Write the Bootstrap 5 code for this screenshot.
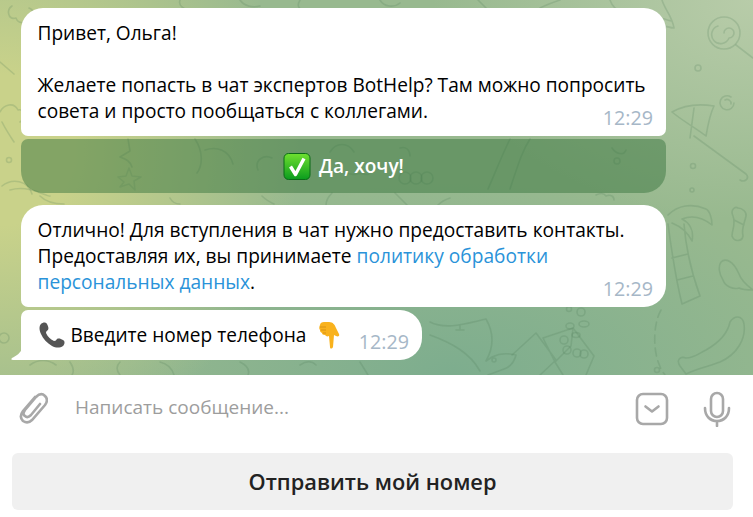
<!DOCTYPE html>
<html lang="ru">
<head>
    <meta charset="UTF-8">
    <meta name="viewport" content="width=device-width, initial-scale=1.0">
    <title>Чат</title>
    <link rel="stylesheet" href="https://cdn.jsdelivr.net/npm/bootstrap@5.3.0/dist/css/bootstrap.min.css">
    <style>
        html, body {
            height: 517px;
            overflow: hidden;
        }

        body {
            font-family: "Open Sans", "Noto Sans", sans-serif;
            background: #fff;
            color: #000;
        }

        .chat-area {
            height: 375px;
            padding: 8px 87px 0 21px;
            background:
                radial-gradient(ellipse 300px 300px at 0% 40%, #c9d28a 0%, #c9d28a 25%, rgba(201, 210, 138, 0) 100%),
                radial-gradient(ellipse 320px 220px at 100% 0%, #b8cca9 0%, rgba(184, 204, 169, 0) 100%),
                radial-gradient(ellipse 400px 200px at 60% 100%, #7dad8e 0%, rgba(125, 173, 142, 0) 100%),
                #98b98f;
        }

        .doodles {
            top: 0;
            left: 0;
            width: 753px;
            height: 375px;
            fill: none;
            stroke: #4d7a55;
            stroke-opacity: .2;
            stroke-width: 1.6;
            stroke-linecap: round;
            stroke-linejoin: round;
        }

        .bubble {
            background: #fff;
            border-radius: 22px;
            padding: 12px 16.5px 0;
            font-size: 19.1px;
            line-height: 26px;
            z-index: 1;
            white-space: nowrap;
        }

        .bubble-first {
            width: 645px;
            height: 128px;
            border-radius: 22px 22px 7px 7px;
        }

        .bubble-second {
            width: 645px;
            height: 102px;
            margin-top: 12px;
            font-size: 19.17px;
            border-radius: 22px 22px 22px 7px;
        }

        .bubble-third {
            width: 401px;
            height: 50px;
            margin-top: 3px;
            padding-top: 11px;
            border-radius: 7px 22px 22px 0;
        }

        .bubble-tail {
            left: -10px;
            bottom: 0;
        }

        .msg-time {
            right: 13px;
            bottom: 6px;
            color: #a6b7c7;
            font-size: 19.7px;
            line-height: 24px;
        }

        .msg-link {
            color: #2a93d9;
            text-decoration: none;
        }

        .inline-emoji {
            display: inline-block;
            vertical-align: -7px;
        }

        .emoji-hand {
            margin-left: 3px;
        }

        .reply-btn {
            width: 645px;
            height: 54px;
            margin-top: 3px;
            border: 0;
            border-radius: 7px 7px 22px 22px;
            background: rgba(55, 115, 60, .48);
            color: #fff;
            font-size: 19.1px;
            font-weight: 600;
            z-index: 1;
        }

        .composer {
            height: 68px;
            padding: 0 22px 0 18px;
        }

        .composer-placeholder {
            margin-left: 27px;
            margin-bottom: 3px;
            color: #9d9d9d;
            font-size: 19px;
        }

        .composer-square {
            margin-right: 34px;
        }

        .keyboard-wrap {
            padding: 10px 20px 7px 12px;
        }

        .keyboard-btn {
            height: 57px;
            padding-top: 8px;
            border: 0;
            border-radius: 6px;
            background: #f0f0f0;
            color: #222;
            font-size: 21.8px;
            font-weight: 600;
        }

        .keyboard-btn:hover {
            background: #e8e8e8;
            color: #222;
        }
    </style>
</head>
<body>

    <div class="chat-area position-relative d-flex flex-column align-items-start">
        <!-- wallpaper doodles -->
        <svg class="doodles position-absolute" viewBox="0 0 753 375">
            <!-- lollipop -->
            <circle cx="724" cy="33" r="16"/><path d="M724 33a5 5 0 1 1 5 5a9 9 0 1 1 -11 -12M736 45l17 13"/>
            <circle cx="698" cy="68" r="3"/>
            <path d="M734 103a7 7 0 1 1 -3 -6M725 100a4 4 0 0 1 6 4"/>
            <!-- bulb -->
            <path d="M662 0c3 10 10 16 12 28l-14 -3M660 25l12 3M660 18c2 0 10 3 12 3"/>
            <!-- umbrella -->
            <path d="M672 112c14 -8 30 -8 42 -6c-4 8 -6 18 -8 30c-10 -8 -22 -14 -34 -24M690 138l4 -30M694 136l52 38c4 4 -1 9 -6 6"/>
            <circle cx="693" cy="166" r="2.5"/><circle cx="692" cy="190" r="2"/>
            <!-- candy -->
            <path d="M738 208c-3 -2 -8 2 -5 8c3 8 -1 14 -1 20c2 6 10 6 11 0c-2 -8 2 -14 3 -20c1 -4 -4 -8 -8 -8zM734 220l10 5"/>
            <!-- fish -->
            <path d="M721 262c4 -4 12 -2 18 12c2 6 6 10 14 16c-6 0 -10 0 -14 -2c-6 2 -14 -2 -16 -8c-4 -6 -5 -14 -2 -18z"/>
            <!-- palm -->
            <path d="M668 215c10 -10 24 -12 38 -6c4 2 6 10 6 16c-10 -8 -20 -10 -30 -6c8 4 12 12 10 22c-4 -8 -10 -14 -20 -18M668 224c4 30 8 56 14 80l18 -8c-8 -22 -14 -46 -16 -72M672 258l16 -4M677 280l16 -4"/>
            <path d="M661 310c-8 14 -8 40 -2 54c2 6 4 8 6 11" stroke-dasharray="8 5"/>
            <!-- banana -->
            <path d="M730 322c4 -6 12 -8 14 2c2 14 -6 30 -24 38c-10 4 -22 6 -34 12l-6 -8c-4 -6 0 -10 6 -8c8 0 12 -4 20 -8c14 -8 22 -18 24 -28z"/>
            <circle cx="657" cy="370" r="2.5"/>
            <!-- gifts -->
            <path d="M543 338l30 -10l21 28l-8 19M543 338l12 24l8 13M573 328l-2 18l-16 16M512 355l24 -22l20 27l-16 15"/>
            <circle cx="564" cy="340" r="4"/><circle cx="567" cy="350" r="4"/><circle cx="577" cy="353" r="4"/><circle cx="584" cy="354" r="4"/>
            <ellipse cx="570" cy="326" rx="4" ry="3"/><ellipse cx="584" cy="324" rx="5" ry="3"/><ellipse cx="576" cy="335" rx="4" ry="2.5"/>
            <circle cx="581" cy="312" r="4"/><circle cx="569" cy="309" r="2.5"/>
            <!-- whale -->
            <path d="M430 322c16 8 34 2 56 -3c8 14 8 28 0 42l6 -4c8 -4 16 -4 24 -2c-2 8 -6 12 -12 14l-16 6M430 335c22 8 40 18 50 36"/>
            <circle cx="494" cy="360" r="2"/>
            <path d="M456 330h8M460 326v4"/>
            <!-- top row -->
            <path d="M300 0c-3 5 -2 9 3 10M380 0c4 7 14 8 20 3M478 0l14 14M540 8c8 -4 14 -6 20 -8M610 0c2 6 6 10 12 12M240 0c4 6 12 8 20 6M180 0c-2 6 4 10 12 10"/>
            <path d="M12 6c-6 4 -4 14 4 12c2 6 10 6 11 0c6 -2 8 -8 2 -10"/>
            <!-- left side -->
            <path d="M0 62l14 12M0 112c4 -8 14 -10 18 -2c6 -2 8 8 2 12M2 122c4 8 8 14 12 20"/>
            <circle cx="9" cy="160" r="2.5"/>
            <path d="M2 186c10 -8 26 -6 30 8"/>
            <!-- under reply button -->
            <path d="M40 196c6 6 14 8 24 8M170 198c2 4 6 6 10 6M262 196c4 4 8 6 12 8M332 193c-4 4 -6 8 -6 12M395 193c4 4 8 8 12 12M450 198c-6 2 -10 5 -12 7M596 195c4 -2 8 -2 10 1c4 -2 8 0 8 4"/>
            <!-- bottom row -->
            <path d="M30 365c8 -6 18 -6 26 0M70 362c4 6 4 10 2 13M120 362c-4 4 -4 8 0 13M160 362c8 2 12 6 14 13M240 362c8 4 10 8 8 13M300 365c6 -4 12 -4 16 0M360 362l8 13"/>
            <circle cx="4" cy="338" r="5"/>
            <!-- pattern behind the reply button -->
            <path d="M128 139l2 12l-10 6c6 2 10 4 12 10M195 139c8 12 8 26 2 34M205 150c12 -4 24 0 28 14M258 170c-4 -10 6 -16 14 -12M330 152c6 -10 18 -10 24 0M345 174c4 -2 8 2 12 0s8 2 12 0M400 148c6 -2 10 2 10 8"/>
            <circle cx="405" cy="178" r="6"/><circle cx="416" cy="178" r="6"/><circle cx="427" cy="178" r="6"/>
            <path d="M510 139c-8 16 -14 32 -22 50M530 139c-8 12 -12 26 -20 50M612 148c4 6 12 8 14 2"/>
            <circle cx="617" cy="161" r="3"/>
            <path d="M120 187l9 -3l6 6l-1 -9l7 -4l-9 -1l-3 -8l-3 8l-8 1l6 5z" opacity=".8"/>
            <path d="M10 190c20 -6 38 8 40 6"/>
        </svg>

        <div class="bubble bubble-first position-relative">
            Привет, Ольга!<br><br>
            Желаете попасть в чат экспертов BotHelp? Там можно попросить<br>
            совета и просто пообщаться с коллегами.
            <span class="msg-time position-absolute">12:29</span>
        </div>

        <button type="button" class="btn reply-btn position-relative d-flex align-items-center justify-content-center gap-2">
            <svg width="28" height="27" viewBox="0 0 27 27">
                <defs>
                    <linearGradient id="checkFill" x1="0" y1="0" x2="0" y2="1">
                        <stop offset="0" stop-color="#6fe02f"/>
                        <stop offset="1" stop-color="#0a9c1e"/>
                    </linearGradient>
                </defs>
                <rect x=".5" y=".5" width="26" height="26" rx="4.5" fill="url(#checkFill)" stroke="#0b6b17"/>
                <path d="M7 13.500l5 8l8.500 -16" fill="none" stroke="#fff" stroke-width="3.400" stroke-linejoin="round"/>
            </svg>
            <span>Да, хочу!</span>
        </button>

        <div class="bubble bubble-second position-relative">
            Отлично! Для вступления в чат нужно предоставить контакты.<br>
            Предоставляя их, вы принимаете <a href="#" class="msg-link">политику обработки<br>персональных данных</a>.
            <span class="msg-time position-absolute">12:29</span>
        </div>

        <div class="bubble bubble-third position-relative">
            <svg class="bubble-tail position-absolute" width="11" height="12" viewBox="0 0 11 12">
                <path d="M11 0v12H2c-2 0 -2 -1 -1 -2c4 -2 9 -5 10 -10z" fill="#fff"/>
            </svg>
            <svg class="inline-emoji" width="28" height="28" viewBox="0 0 28 28">
                <path d="M3 3c2 -2 5 -2 6 0c1 2 2 4 1 6c-1 1 -2 1 -2 3c2 4 4 6 8 8c2 0 2 -1 3 -2c2 -1 4 0 6 1c2 1 2 4 0 6c-3 2 -7 2 -11 0c-5 -3 -9 -7 -11 -12c-2 -4 -2 -8 0 -10z" fill="#555"/>
            </svg>
            Введите номер телефона&nbsp;
            <svg class="inline-emoji emoji-hand" width="22" height="27" viewBox="0 0 22 27">
                <path d="M1 3c0 -2 2 -3 4 -3h5c4 0 6 3 7 6l3 6c1 2 -1 3 -3 2l-2 -1l-1 12c-1 2 -3 2 -3 0l-1 -11c-2 1 -3 0 -4 -1c-2 0 -3 -1 -3 -2c-2 -1 -2 -2 -2 -3c-1 -1 -1 -3 0 -5z" fill="#f9b21d"/>
                <path d="M1 5h6M2 8h5M4 11h3" fill="none" stroke="#d18a12" stroke-width=".8"/>
            </svg>
            <span class="msg-time position-absolute">12:29</span>
        </div>
    </div>

    <div class="composer d-flex align-items-center">
        <svg width="30" height="34" viewBox="0 0 30 34" fill="none" stroke="#a8a8a8" stroke-width="2.600" stroke-linecap="round">
            <path d="M17 5L5 19c-3 4 -3 7 0 10c3 2 6 2 9 -1L27 13c3 -4 2 -7 0 -9c-3 -3 -6 -2 -9 1L7 18c-2 3 -2 5 0 6c2 2 4 1 6 -1L22 12"/>
        </svg>
        <span class="composer-placeholder flex-grow-1">Написать сообщение...</span>
        <svg class="composer-square" width="34" height="34" viewBox="0 0 34 34" fill="none" stroke="#a8a8a8" stroke-width="2.600" stroke-linecap="round" stroke-linejoin="round">
            <rect x="2" y="2" width="30" height="30" rx="6"/>
            <path d="M10.500 14.500L17 19.500l6.500 -5"/>
        </svg>
        <svg width="28" height="36" viewBox="0 0 28 36" fill="none" stroke="#a8a8a8" stroke-width="2.600" stroke-linecap="round">
            <rect x="8" y="2" width="12" height="24" rx="6"/>
            <path d="M2 17c0 8 5 13 12 13s12 -5 12 -13M14 30v5"/>
        </svg>
    </div>

    <div class="keyboard-wrap">
        <a href="#" class="btn keyboard-btn w-100 d-flex align-items-center justify-content-center">Отправить мой номер</a>
    </div>

</body>
</html>
